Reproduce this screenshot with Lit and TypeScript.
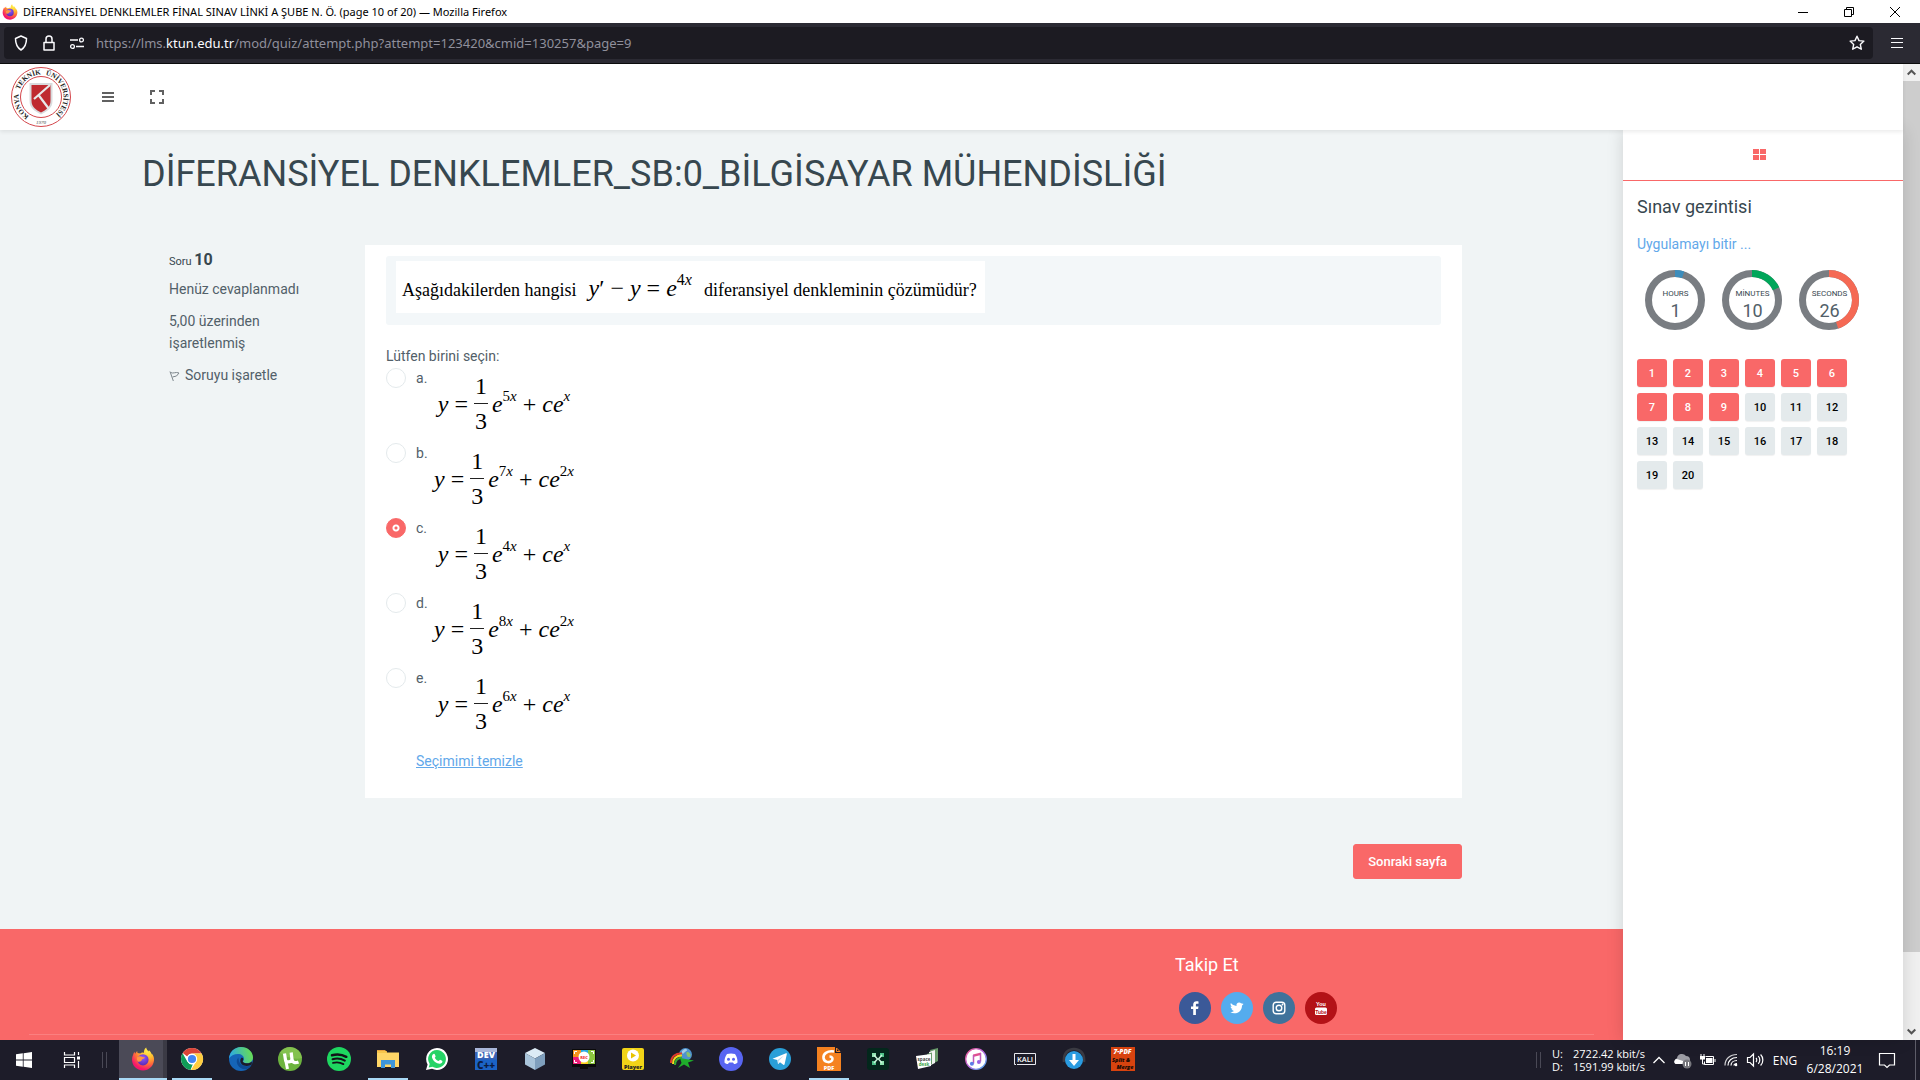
import { LitElement, html, svg, css, nothing, type TemplateResult } from "lit";
import { customElement, state } from "lit/decorators.js";
import { classMap } from "lit/directives/class-map.js";

type Glyph = TemplateResult<2>;

const icon = (size: number, body: Glyph, box = "0 0 24 24") => html`
  <svg width=${size} height=${size} viewBox=${box} fill="none" aria-hidden="true">${body}</svg>
`;

const firefox = svg`
  <defs>
    <radialGradient id="fx" cx="0.72" cy="0.12" r="0.95">
      <stop offset="0" stop-color="#fff44f"/><stop offset="0.35" stop-color="#ffbd2e"/>
      <stop offset="0.62" stop-color="#ff7139"/><stop offset="0.9" stop-color="#f5156c"/>
    </radialGradient>
    <radialGradient id="fp" cx="0.5" cy="0.3" r="0.7">
      <stop offset="0" stop-color="#9059ff"/><stop offset="1" stop-color="#5b2ab5"/>
    </radialGradient>
  </defs>
  <path fill="url(#fx)" d="M2.2 7.5c.2-1 .7-2 1.3-2.700.1.800.300 1.400.600 1.900C4.600 5.600 5.500 4.700 6.200 3.900c0 .9.100 1.600.5 2.200.8.3 1.700.2 2.600.3C10.300 5.500 12 5.400 13 6c-.3-2 .4-4.300 2.200-5.500.2 1.800 1.300 2.800 2.600 4.100.1-.5.100-1-.1-1.500 1.500 1.200 2.600 2.900 3 4.400.1-.3.100-.6.100-.9C22.700 9 23.300 11.300 23 13.600 22.400 19.300 17.800 23.500 12 23.500 5.800 23.500 1 18.700 1 12.600c0-1.800.4-3.600 1.200-5.100z"/>
  <circle cx="12" cy="12.800" r="5.600" fill="url(#fp)"/>
  <path fill="#ff9640" d="M6 10.500c1.500-1.600 4-1.800 5.600-.6 1 .1 1.900.1 2.400.5-.6 1-2.300 1.400-3 2.100-.4 1.900-2.500 2.500-4.300 2C6 13.300 5.700 11.800 6 10.500z"/>
`;

const windowsLogo = svg`<path fill="#fff" d="M4 6.300l6.800-1v6.200H4zM11.600 5.200L20 4v7.500h-8.400zM4 12.400h6.800v6.300L4 17.800zM11.600 12.400H20V20l-8.400-1.200z"/>`;
const taskView = svg`<g stroke="#fff" stroke-width="1.200"><path d="M4.500 4v3h10V4M4.500 20v-3h10v3M4.500 9.500h10v5h-10zM18.500 4v3M18.500 13v7"/></g><path fill="#fff" d="M17 8.500h3v3h-3z"/>`;
const chrome = svg`
  <circle cx="12" cy="12" r="11" fill="#fff"/>
  <path fill="#db4437" d="M12 1a11 11 0 0 1 9.600 5.600H12a5.400 5.400 0 0 0-4.800 3L2.800 6A11 11 0 0 1 12 1z"/>
  <path fill="#0f9d58" d="M2.600 6.300L7.300 14.600A5.400 5.400 0 0 0 12.800 17.300L10.500 22.900A11 11 0 0 1 2.600 6.300z"/>
  <path fill="#ffcd40" d="M12 6.600h9.600A11 11 0 0 1 11 23l5.400-9a5.400 5.400 0 0 0-4.400-7.400z"/>
  <circle cx="12" cy="12" r="5.200" fill="#fff"/><circle cx="12" cy="12" r="4.100" fill="#4285f4"/>`;
const edge = svg`
  <defs><linearGradient id="e1" x1="0" y1="0.500" x2="1" y2="0.300"><stop offset="0" stop-color="#2aa7e8"/><stop offset="1" stop-color="#6be04c"/></linearGradient></defs>
  <circle cx="12" cy="12" r="12" fill="#1565b8"/>
  <path fill="url(#e1)" d="M0 11.500C.5 5 5.500 0 12 0c7 0 12 5 12 10.500 0 3.500-2.700 5.800-6 5.800-2.500 0-4-.8-4-1.700 0-.6 1-1.100 1-2.900C15 9 12.500 6.900 9 6.900c-4 0-7.500 2-9 4.600z"/>
  <path fill="#0d4a94" d="M9.500 10.500C7.500 12 7.200 15 8.500 17.500 10 20.500 13.500 22.500 17 22.200c2-.4 4-2 5.300-3.900-3.800 1.900-8.700 1.200-11.200-2-1.200-1.700-1.600-3.800-1.600-5.800z"/>
  <path fill="#1c1b29" d="M22.800 17.500c-1 .7-3 1.500-5.300 1.400-3.500-.1-6.500-2.400-6.200-5.500.1-1.300.7-2.200 1.600-2.800 1.400.3 2 1.700.9 3.200-.4.800.6 2.500 4.200 2.500 2 0 3.700-.6 4.900-1.800z"/>`;
const utorrent = svg`<circle cx="12" cy="12" r="12" fill="#6db33f"/><path fill="#92cc5a" d="M12 0a12 12 0 0 1 12 11C17 13 7 10 2 5.500A12 12 0 0 1 12 0z" opacity=".6"/><path stroke="#fff" stroke-width="3.200" stroke-linejoin="round" d="M6.500 6.500l1 6.500c.6 2.500 5.500 2.500 6.500-.5L13.200 5.500M14 12.500c.8 3 3 4 6.500 2.500"/><path stroke="#fff" stroke-width="3" d="M7.500 12l2 10"/>`;
const spotify = svg`<circle cx="12" cy="12" r="12" fill="#1ed760"/><g stroke="#121218" stroke-linecap="round"><path stroke-width="2.500" d="M5 8.300c5-1.500 10-.9 14.300 1.500"/><path stroke-width="2.100" d="M5.600 12.200c4.200-1.200 8.500-.7 12.200 1.400"/><path stroke-width="1.800" d="M6 15.900c3.600-1 7.200-.6 10.400 1.200"/></g>`;
const folder = svg`<path fill="#e8a33d" d="M1 3h8l2 2v3H1z"/><path fill="#ffd667" d="M1 5.500h22V20H1z"/><path fill="#f7c64c" d="M1 4h10l-1 2H1z"/><path fill="#3d95d9" d="M5 13h14v8h-4v-3.500H9V21H5z"/>`;
const whatsapp = svg`<path fill="#fff" d="M12 1a11 11 0 1 1-5 20.800L1 23l1.600-5.500A11 11 0 0 1 12 1z"/><path fill="#25d366" d="M12 3a9 9 0 1 1-4.600 16.800L3.700 20.500l1-3.500A9 9 0 0 1 12 3z"/><path fill="#fff" d="M8.500 7c.7-.4 1.200-.1 1.500.7l.6 1.500c.1.700-.8 1.200-.8 1.600.7 1.500 2 2.700 3.700 3.300.6 0 1-1.300 1.600-1.300l2 1c.6.400.3 1.500-.2 2-1.300 1.300-3 1-4.600.4C9.700 15 7.700 13 7 10.400 6.800 8.900 7.300 7.700 8.500 7z"/>`;
const dev = svg`<path fill="#3862b5" d="M1 1h22v22H1z"/><path fill="#a9b6da" d="M1 1h22v4H1z"/><path fill="#1b63c5" d="M1 12.500h22V23H1z"/><text x="12" y="11" text-anchor="middle" font-family="Open Sans" font-weight="800" font-size="9" fill="#fff">DEV</text><text x="12" y="22" text-anchor="middle" font-family="Open Sans" font-weight="800" font-size="10" fill="#0c1b3e">C++</text>`;
const cube = svg`<path fill="#dcebf5" d="M12 1l10 5-10 5.500L2 6z"/><path fill="#a9c4da" d="M2 6l10 5.500V23L2 17.500z"/><path fill="#7f9fbd" d="M22 6l-10 5.500V23l10-5.500z"/>`;
const rec = svg`<path fill="#0a0a0a" d="M0 2h24v18H0zM8 20h8v2H8z"/><path fill="#f7941d" d="M1 3h8v8H1z"/><path fill="#29abe2" d="M9 3h7v8H9z"/><path fill="#8cc63f" d="M16 3h7v14h-7z"/><path fill="#ed1e79" d="M1 10h8v7H1z"/><path fill="#fcd21c" d="M9 12h7v5H9z"/><circle cx="12" cy="10" r="5.500" fill="#fff"/><text x="12" y="12" text-anchor="middle" font-family="Open Sans" font-weight="800" font-size="4" fill="#e33">REC</text><path stroke="#fff" d="M2.500 7V4.500H5M19 4.500h2.500V7M2.500 13v2.500H5M19 15.500h2.500V13"/>`;
const player = svg`<rect x="1" y="1" width="22" height="22" rx="2" fill="#f2d417"/><circle cx="12" cy="8.500" r="6" fill="#fff"/><path fill="#e8c400" d="M10 5.500l5 3-5 3z"/><text x="12" y="21.500" text-anchor="middle" font-family="Open Sans" font-weight="800" font-size="5.500" fill="#222">Player</text>`;
const idm = svg`<circle cx="15.500" cy="7.500" r="6.500" fill="#4f93cf"/><path fill="#a8cfe8" d="M12 4c2-2.500 4-2.500 5-1.500s-2 2-3 3.500-2.500.5-2-2z"/><path fill="#8cc36a" d="M17 5c2 0 4 2 3.500 4s-3 1-3.500-.5-1-2.500 0-3.500z"/><g stroke-width="2"><path stroke="#e03a2b" d="M1 16C1 9 6 6 12 6.500"/><path stroke="#f7d51d" d="M3 17c0-5 3-8.500 9-8.500"/><path stroke="#3aa832" d="M5 18c0-4 2-7 7-7.500"/></g><path fill="#1fae2b" d="M10 11l14 2.500-6 2L20 21l-6-3.500L8 21l3.500-5z"/>`;
const discord = svg`<circle cx="12" cy="12" r="12" fill="#5865f2"/><path fill="#fff" d="M8 7c2.500-.8 5.500-.8 8 0 1.800 2.500 2.700 5.500 2.500 8.500-1 1-2.300 1.500-3.500 1.500l-1-1.500H10L9 17c-1.200 0-2.500-.5-3.500-1.500C5.300 12.500 6.200 9.500 8 7z"/><circle cx="9.500" cy="12.300" r="1.500" fill="#5865f2"/><circle cx="14.500" cy="12.300" r="1.500" fill="#5865f2"/>`;
const telegram = svg`<circle cx="12" cy="12" r="11" fill="#2a9fd8"/><path fill="#fff" d="M4.500 11.800l13.500-5.500c.8-.2 1 .3.800 1l-2.200 10c-.2.700-.8.800-1.300.4l-3.300-2.400-2 1.900-.6-4.200z"/><path fill="#b9dcf0" d="M9.400 13l6.600-4.500-5.300 5.600-.4 3.100z"/>`;
const foxit = svg`<path fill="#f58220" d="M0 0h18v6h6v18H0z"/><path stroke="#f58220" d="M19.500 1v3.500H23z"/><path stroke="#fff" stroke-width="2.600" d="M17 4.500C10 3.500 6 7 6.500 11s6 5.500 8.500 2.500c1-2 .5-4-2.500-4"/><text x="12" y="23" text-anchor="middle" font-family="Open Sans" font-weight="800" font-size="5.500" fill="#fff">PDF</text>`;
const greenTile = svg`<rect x="1" y="1" width="22" height="22" rx="3" fill="#03271c"/><path fill="#8fe3b0" d="M6 6h4v4H6zM14 14h4v4h-4z"/><path fill="#4fc38a" d="M14 6h4v4h-4zM6 14h4v4H6z"/><path stroke="#c9f3da" stroke-width="1.500" d="M8 8l3.500 4L8 16M16 8l-3.500 4 3.500 4"/>`;
const spacedesk = svg`<path fill="#6a9c6c" d="M15 3l8-2v13l-4 2z"/><path fill="#f2f5f2" d="M14 5l6-2v13l-4 2z"/><path fill="#6a9c6c" d="M12 7l5-1.500V17l-4 2z"/><path fill="#fff" d="M1 9l15-2v12L3 22z"/><text x="9" y="14" text-anchor="middle" font-family="Open Sans" font-weight="700" font-size="4.500" fill="#444">space</text><text x="9" y="19" text-anchor="middle" font-family="Open Sans" font-weight="700" font-size="4.500" fill="#3aa34a">desk</text>`;
const itunes = svg`<defs><linearGradient id="it" x1="0" y1="0" x2="1" y2="1"><stop offset="0" stop-color="#f25a8e"/><stop offset="0.500" stop-color="#b968e0"/><stop offset="1" stop-color="#46b4f0"/></linearGradient></defs><circle cx="12" cy="12" r="10.300" fill="#fff" stroke="url(#it)" stroke-width="1.300"/><path fill="#e05090" d="M9 7.500l8-2V8l-8 2z"/><path stroke="#c05ab8" stroke-width="1.500" d="M9.500 8v8.500M16.500 6v8.500"/><circle cx="7.900" cy="16.800" r="2" fill="#5d7de8"/><circle cx="14.900" cy="15" r="2" fill="#9a5fe0"/>`;
const kali = svg`<path stroke="#e8e8ee" d="M1.500 6.500h21v11H4M1.500 6.500v11H3"/><text x="12" y="15" text-anchor="middle" font-family="Open Sans" font-weight="600" font-size="7.500" fill="#fff">KALI</text>`;
const download = svg`<path stroke="#3a3a42" stroke-width="2.500" d="M2 15C1 6 6 2 12 2s11 4 10 13"/><circle cx="12" cy="13" r="9" fill="#2a9be0"/><path fill="#fff" d="M10.500 7h3v6H17l-5 6-5-6h3.500z"/>`;
const sevenPdf = svg`<path fill="#d8430f" d="M0 0h24v24H0z"/><g font-family="Open Sans" font-weight="800" font-style="italic" text-anchor="middle"><text x="11.500" y="7" font-size="6.500" fill="#fff">7-PDF</text><text x="10" y="15" font-size="5.500" fill="#1a0a05">Split &amp;</text><text x="14" y="21.500" font-size="5.500" fill="#1a0a05">Merge</text></g>`;

const crest = svg`
  <defs><path id="rim" d="M30 52.500A22.500 22.500 0 1 1 30.100 52.500"/></defs>
  <circle cx="30" cy="30" r="29.500" fill="#fff" stroke="#d4474c" stroke-width="1"/>
  <circle cx="30" cy="30" r="20.500" stroke="#d4474c" stroke-width="1"/>
  <g font-family="Liberation Serif" font-weight="700" font-size="7" fill="#222" text-anchor="middle">
    <text><textPath href="#rim" startOffset="18%">KONYA</textPath></text>
    <text><textPath href="#rim" startOffset="40%">TEKNİK</textPath></text>
    <text><textPath href="#rim" startOffset="71%">ÜNİVERSİTESİ</textPath></text>
  </g>
  <text x="30" y="57" text-anchor="middle" font-family="Liberation Serif" font-style="italic" font-size="5" fill="#444">1970</text>
  <path fill="#d9dbdd" d="M18.500 16h23v18c0 7-5.500 10.500-11.500 13.500C24 44.500 18.500 41 18.500 34z"/>
  <path fill="#bf2a30" d="M20.500 18h19v16c0 6-4.500 9-9.500 11.500C25 43 20.500 40 20.500 34z"/>
  <path stroke="#e8e9ea" stroke-width="2.200" d="M39 18L23 32M27.500 28L38 42"/>
`;

interface TaskItem { name: string; glyph: Glyph; running?: boolean; active?: boolean }

const TASKS: TaskItem[] = [
  { name: "Firefox", glyph: firefox, active: true },
  { name: "Chrome", glyph: chrome, running: true },
  { name: "Edge", glyph: edge },
  { name: "uTorrent", glyph: utorrent },
  { name: "Spotify", glyph: spotify },
  { name: "File Explorer", glyph: folder, running: true },
  { name: "WhatsApp", glyph: whatsapp },
  { name: "Dev-C++", glyph: dev },
  { name: "VirtualBox", glyph: cube },
  { name: "Recorder", glyph: rec },
  { name: "Player", glyph: player },
  { name: "Download Manager", glyph: idm },
  { name: "Discord", glyph: discord },
  { name: "Telegram", glyph: telegram },
  { name: "Foxit PDF", glyph: foxit, running: true },
  { name: "Camtasia", glyph: greenTile },
  { name: "spacedesk", glyph: spacedesk },
  { name: "iTunes", glyph: itunes },
  { name: "Kali", glyph: kali },
  { name: "Downloads", glyph: download },
  { name: "7-PDF Split & Merge", glyph: sevenPdf },
];

const OPTIONS = [
  { key: "a", first: "5", second: "" },
  { key: "b", first: "7", second: "2" },
  { key: "c", first: "4", second: "" },
  { key: "d", first: "8", second: "2" },
  { key: "e", first: "6", second: "" },
];

const CLOCKS = [
  { label: "HOURS", value: 1, share: 5, color: "#3c8dbc" },
  { label: "MİNUTES", value: 10, share: 18, color: "#00a65a" },
  { label: "SECONDS", value: 26, share: 45, color: "#f56954" },
];

@customElement("window-chrome")
class WindowChrome extends LitElement {
  static styles = css`
    :host { display: block; font-family: "Noto Sans", "Open Sans", sans-serif; }
    button { border: 0; background: none; padding: 0; display: grid; place-items: center; }
    .title { display: flex; align-items: center; height: 23px; background: #fff; color: #000; font-size: 11px; padding: 0 2px; }
    .title span { flex: 1; padding-left: 5px; }
    .title button { width: 46px; height: 23px; }
    .bar { display: flex; align-items: center; height: 40px; background: #2b2a33; border-bottom: 1px solid #0c0c0d; padding-left: 4px; }
    .field { flex: 1; display: flex; align-items: center; height: 32px; background: #1c1b22; border-radius: 4px; padding: 0 7px 0 8px; }
    .field button { width: 18px; height: 18px; margin-right: 10px; }
    .field .star { margin: 0; }
    .url { flex: 1; font-size: 13px; color: #8f8f9b; text-decoration: none; }
    .url b { font-weight: 400; color: #fbfbfe; }
    .menu { width: 47px; height: 32px; }
  `;
  render() {
    return html`
      <header class="title">
        ${icon(16, firefox)}
        <span>DİFERANSİYEL DENKLEMLER FİNAL SINAV LİNKİ A ŞUBE N. Ö. (page 10 of 20) — Mozilla Firefox</span>
        <button aria-label="Minimize">${icon(12, svg`<path stroke="#000" d="M1 6.500h10"/>`, "0 0 12 12")}</button>
        <button aria-label="Restore">${icon(12, svg`<path stroke="#000" d="M1.500 3.500h7v7h-7zM3.500 3V1.500h7v7H9"/>`, "0 0 12 12")}</button>
        <button aria-label="Close">${icon(12, svg`<path stroke="#000" d="M1 1l10 10M11 1L1 11"/>`, "0 0 12 12")}</button>
      </header>
      <nav class="bar">
        <div class="field">
          <button aria-label="Tracking protection">${icon(16, svg`<path stroke="#fbfbfe" stroke-width="1.500" stroke-linejoin="round" d="M8 1L13.500 3.500C13.500 9 12 12.500 8 15 4 12.500 2.500 9 2.500 3.500z"/>`, "0 0 16 16")}</button>
          <button aria-label="Connection secure">${icon(16, svg`<path stroke="#fbfbfe" stroke-width="1.500" stroke-linejoin="round" d="M3 7.500h10v7.500H3zM5 7.500V4a3 3 0 0 1 6 0v3.500"/>`, "0 0 16 16")}</button>
          <button aria-label="Permissions">${icon(16, svg`<path stroke="#fbfbfe" stroke-width="1.500" d="M1 5h8M7 11.500h8"/><circle cx="12.500" cy="5" r="1.900" stroke="#fbfbfe" stroke-width="1.300"/><circle cx="3.500" cy="11.500" r="1.900" stroke="#fbfbfe" stroke-width="1.300"/>`, "0 0 16 16")}</button>
          <a class="url" href="#">https://lms.<b>ktun.edu.tr</b>/mod/quiz/attempt.php?attempt=123420&amp;cmid=130257&amp;page=9</a>
          <button class="star" aria-label="Bookmark">${icon(16, svg`<path stroke="#fbfbfe" stroke-width="1.400" stroke-linejoin="round" d="M8 1.200l2 4.400 4.900.5-3.600 3.300 1 4.800L8 11.800l-4.300 2.400 1-4.800L1.100 6.100 6 5.600z"/>`, "0 0 16 16")}</button>
        </div>
        <button class="menu" aria-label="Menu">${icon(12, svg`<path stroke="#fbfbfe" d="M0 1.500h12M0 5.500h12M0 10.500h12"/>`, "0 0 12 12")}</button>
      </nav>
    `;
  }
}

@customElement("quiz-question")
class QuizQuestion extends LitElement {
  @state() private choice = "c";

  static styles = css`
    :host { display: block; font-family: Roboto, sans-serif; font-size: 14px; line-height: 22px; color: #526069; }
    .row { display: grid; grid-template-columns: 223px minmax(0, 1fr); }
    .info { padding: 5px 50px 0 27px; display: flex; flex-direction: column; gap: 10px; align-items: flex-start; }
    .info p { margin: 0; }
    h3 { margin: 0 0 -4px; font-size: 11px; font-weight: 400; line-height: 20px; color: #37474f; }
    h3 b { font-size: 16px; font-weight: 700; }
    .flag { display: flex; align-items: center; gap: 4px; border: 0; background: none; padding: 0; font: inherit; color: inherit; }
    .card { background: #fff; padding: 11px 21px 26px; }
    .text { background: #f3f7f9; border-radius: 3px; padding: 5px 10px 12px; display: flex; }
    .serif { font-family: "Liberation Serif", serif; color: #000; }
    .stem { display: flex; align-items: baseline; margin: 0; background: #fff; height: 52px; line-height: 52px; padding: 3px 8px 0 6px; box-sizing: border-box; font-size: 18px; white-space: pre; }
    .eq { font-size: 24px; padding: 0 12px; line-height: 24px; }
    sup { font-size: 16px; line-height: 0; vertical-align: 11px; }
    fieldset { border: 0; margin: 20px 0 0; padding: 0; }
    legend { padding: 0; }
    .option { display: grid; grid-template-columns: 20px 16px auto; column-gap: 10px; justify-content: start; height: 75px; }
    input { appearance: none; width: 20px; height: 20px; margin: 1px 0 0; border: 1px solid #e4eaec; border-radius: 50%; background: #fff; }
    input:checked { border-color: #f96868; background: radial-gradient(circle, #f96868 1px, #fff 2px 3px, #f96868 4px); }
    .math { display: flex; align-items: center; justify-content: center; width: 144px; margin-left: -10px; height: 73px; font-size: 24px; line-height: 26px; white-space: pre; }
    .math sup { font-size: 15px; }
    .frac { display: flex; flex-direction: column; align-items: center; width: 14px; margin: 0 4px 0 6px; line-height: 34px; }
    .frac i { width: 100%; height: 1px; background: #222; }
    .clear { display: inline-block; margin: 8px 0 0 30px; color: #62a8ea; }
    .submit { display: flex; justify-content: flex-end; padding: 46px 0 50px; }
    .next { height: 35px; border: 1px solid #f96868; border-radius: 3px; background: #f96868; color: #fff; font: 500 13px/20px Roboto, sans-serif; padding: 0 14px; }
  `;

  render() {
    return html`
      <div class="row">
        <section class="info">
          <h3>Soru <b>10</b></h3>
          <p>Henüz cevaplanmadı</p>
          <p>5,00 üzerinden işaretlenmiş</p>
          <button class="flag">
            ${icon(12, svg`<path stroke="#7d868c" d="M1 2.500l3.500 10M1.500 3.500c3 1.500 5-1 8.500.5L7.500 7 3.500 8"/>`, "0 0 12 12")}Soruyu işaretle
          </button>
        </section>
        <section class="card">
          <div class="text">
            <p class="stem serif">Aşağıdakilerden hangisi<span class="eq"><em>y</em>′ − <em>y</em> = <em>e</em><sup>4<em>x</em></sup></span>diferansiyel denkleminin çözümüdür?</p>
          </div>
          <fieldset>
            <legend>Lütfen birini seçin:</legend>
            ${OPTIONS.map(
              (o) => html`
                <label class="option">
                  <input type="radio" name="answer" .checked=${this.choice === o.key} @change=${() => (this.choice = o.key)} />
                  <span>${o.key}.</span>
                  <span class="math serif"><span><em>y</em> =</span><span class="frac"><span>1</span><i></i><span>3</span></span><span><em>e</em><sup>${o.first}<em>x</em></sup> + <em>ce</em><sup>${o.second}<em>x</em></sup></span></span>
                </label>
              `
            )}
          </fieldset>
          <a class="clear" href="#">Seçimimi temizle</a>
        </section>
      </div>
      <div class="submit"><button class="next">Sonraki sayfa</button></div>
    `;
  }
}

@customElement("quiz-sidebar")
class QuizSidebar extends LitElement {
  static styles = css`
    :host { display: block; font-family: Roboto, sans-serif; background: #fff; color: #37474f; }
    .tab { display: grid; place-items: center; width: 100%; height: 51px; border: 0; border-bottom: 1px solid #f96868; background: none; padding: 0 8px 0 0; }
    .body { padding: 16px 14px; }
    h2 { margin: 0; font-size: 18px; font-weight: 400; line-height: 20px; }
    .finish { display: block; margin-top: 16px; font-size: 14px; line-height: 22px; color: #62a8ea; text-decoration: none; }
    .clocks { display: flex; gap: 16px; padding: 14px 8px 28px; }
    .clock { display: grid; place-items: center; width: 61px; height: 62px; }
    .clock > * { grid-area: 1 / 1; }
    .face { display: flex; flex-direction: column; align-items: center; font-size: 8px; line-height: 9px; padding-top: 12px; }
    .face b { font-weight: 400; font-size: 18px; line-height: 26px; color: #526069; }
    .pages { display: grid; grid-template-columns: repeat(6, 30px); gap: 6px; }
    .page { display: grid; place-items: center; height: 28px; border-radius: 3px; background: #e4eaec; color: #000; font-size: 11px; font-weight: 500; text-decoration: none; box-shadow: 0 1px 1px rgba(0, 0, 0, 0.06); }
    .done { background: #f96868; color: #fff; }
  `;
  render() {
    return html`
      <button class="tab" aria-label="Bloklar">${icon(14, svg`<path fill="#f96868" d="M1 1h6v5H1zM8 1h6v5H8zM1 7h6v5H1zM8 7h6v5H8z"/>`, "0 0 14 14")}</button>
      <div class="body">
        <h2>Sınav gezintisi</h2>
        <a class="finish" href="#">Uygulamayı bitir ...</a>
        <div class="clocks">
          ${CLOCKS.map(
            (c) => html`
              <div class="clock">
                <svg width="61" height="61" viewBox="0 0 61 61" fill="none" stroke-width="7" aria-hidden="true">
                  <circle cx="30" cy="30" r="26.500" stroke="#797d82" />
                  <circle cx="30" cy="30" r="26.500" stroke=${c.color} pathLength="100" stroke-dasharray="${c.share} 100" transform="rotate(-90 30 30)" />
                </svg>
                <div class="face"><span>${c.label}</span><b>${c.value}</b></div>
              </div>
            `
          )}
        </div>
        <nav class="pages">
          ${Array.from({ length: 20 }, (_, i) => html`<a href="#" class=${classMap({ page: true, done: i < 9 })}>${i + 1}</a>`)}
        </nav>
      </div>
    `;
  }
}

@customElement("task-bar")
class TaskBar extends LitElement {
  static styles = css`
    :host { display: flex; height: 40px; background: #1d1c29; color: #fff; font: 12px "Open Sans", "Noto Sans", sans-serif; }
    button { border: 0; background: none; padding: 0; color: inherit; font: inherit; display: grid; place-items: center; }
    .item { width: 48px; height: 40px; box-sizing: border-box; }
    .apps { display: flex; gap: 1px; }
    .apps .item { padding-bottom: 2px; border-bottom: 0; }
    .apps .active { background: linear-gradient(to right, #4b4a57 44px, #3b3a45 44px); border-bottom: 2px solid #a9d9f5; padding-bottom: 0; }
    .apps .running { background: linear-gradient(#a9d9f5, #a9d9f5) bottom / 40px 2px no-repeat; }
    .grip { width: 3px; height: 16px; border: solid #4a4956; border-width: 0 1px; align-self: center; }
    .grip.left { margin: 0 12px 0 6px; }
    .tray { margin-left: auto; display: flex; align-items: center; }
    .net { display: grid; grid-template-columns: 21px 72px; margin: 0 2px 0 11px; font-size: 11px; line-height: 13px; white-space: nowrap; }
    .net span:nth-child(even) { text-align: right; }
    .tray button { width: 24px; height: 40px; }
    .tray .lang { width: 36px; }
    .tray .clock { width: 64px; margin-right: 5px; line-height: 18px; align-content: center; }
    .tray .note { width: 30px; }
    .desk { border-left: 1px solid #5d5c68; width: 4px; height: 40px; margin-left: 13px; }
  `;
  render() {
    return html`
      <button class="item" aria-label="Start">${icon(24, windowsLogo)}</button>
      <button class="item" aria-label="Task view">${icon(24, taskView)}</button>
      <span class="grip left"></span>
      <nav class="apps">
        ${TASKS.map(
          (t) => html`<button class=${classMap({ item: true, active: !!t.active, running: !!t.running })} aria-label=${t.name} aria-current=${t.active ? "true" : nothing}>${icon(24, t.glyph)}</button>`
        )}
      </nav>
      <div class="tray">
        <span class="grip"></span>
        <div class="net"><span>U:</span><span>2722.42 kbit/s</span><span>D:</span><span>1591.99 kbit/s</span></div>
        <button aria-label="Hidden icons">${icon(14, svg`<path stroke="#fff" stroke-width="1.300" d="M1.500 10L7 4.500 12.500 10"/>`, "0 0 14 14")}</button>
        <button aria-label="OneDrive">${icon(18, svg`<path fill="#9b9ba3" d="M3 13a3 3 0 0 1 0-5.800A5 5 0 0 1 12 5a4 4 0 0 1 4 4v4z"/><path fill="#fff" d="M1.500 13a2.500 2.500 0 0 1 3-4.500L9 10v3z"/><circle cx="13" cy="13" r="4.500" fill="#77777d"/><path stroke="#fff" d="M11.500 11v4M14.500 11v4"/>`, "0 0 18 18")}</button>
        <button aria-label="Battery">${icon(18, svg`<path stroke="#fff" d="M7.500 5.500h8v8h-9v-3M17 8v3"/><path fill="#fff" d="M8 7h6.500v5H8zM2 5h5v3.500H2z"/><path stroke="#fff" d="M3 5V3M6 5V3M4.500 8v5H7"/>`, "0 0 18 18")}</button>
        <button aria-label="Wi-Fi">${icon(18, svg`<g stroke="#fff" stroke-width="1.200"><path d="M3 14.500C3 8 8 3.500 15 3.500" opacity=".8"/><path d="M6 14.500C6 10 9.500 6.500 15 6.500M9 14.500c0-3 2.500-5 6-5"/><path d="M12 14.500c0-1 1-2 3-2"/></g><circle cx="14" cy="14" r="1.300" fill="#fff"/>`, "0 0 18 18")}</button>
        <button aria-label="Volume">${icon(18, svg`<path stroke="#fff" stroke-width="1.200" d="M1.500 6.500H4L7.500 3v12L4 11.500H1.500zM10 7c1 1 1 3 0 4M12.300 5.200c2 2 2 5.600 0 7.600M14.600 3.500c3 3 3 8 0 11"/>`, "0 0 18 18")}</button>
        <button class="lang">ENG</button>
        <button class="clock"><span>16:19</span><span>6/28/2021</span></button>
        <button class="note" aria-label="Notifications">${icon(18, svg`<path stroke="#fff" stroke-width="1.200" d="M1.500 2.500h15v11.500h-5L9 16.500 6.500 14h-5z"/>`, "0 0 18 18")}</button>
        <span class="desk"></span>
      </div>
    `;
  }
}

@customElement("app-root")
class AppRoot extends LitElement {
  static styles = css`
    :host { display: flex; flex-direction: column; min-height: 100vh; background: #f0f4f5; font-family: Roboto, sans-serif; }
    .view { flex: 1; display: flex; }
    .site { flex: 1; display: flex; flex-direction: column; min-width: 0; }
    .top { display: flex; align-items: center; height: 66px; background: #fff; padding-left: 11px; box-shadow: 0 2px 4px rgba(0, 0, 0, 0.08); z-index: 2; }
    .top button { border: 0; background: none; padding: 0; display: grid; place-items: center; width: 49px; height: 66px; }
    .brand { display: grid; margin-right: 12px; }
    .columns { flex: 1; display: flex; }
    .content { flex: 1; display: flex; flex-direction: column; min-width: 0; }
    main { flex: 1; padding: 24px 161px 0 142px; }
    h1 { margin: 0 0 51px; font-size: 36px; line-height: 40px; font-weight: 400; color: #37474f; }
    quiz-sidebar { flex: 0 0 280px; z-index: 1; box-shadow: 0 0 16px rgba(0, 0, 0, 0.14); }
    footer { background: #f96868; color: #fff; padding: 25px 29px 5px; }
    .follow { width: 419px; margin: 0 0 0 auto; }
    footer h2 { margin: 0 0 16px; font-size: 18px; font-weight: 400; line-height: 22px; }
    .social { display: flex; gap: 10px; padding: 0 4px 10px; }
    .social a { display: grid; place-items: center; width: 32px; height: 32px; border-radius: 50%; }
    .fb { background: #3b5998; }
    .tw { background: #55acee; }
    .ig { background: #3f729b; }
    .yt { background: #b31217; }
    hr { margin: 0; border: 0; height: 1px; background: #fb8080; }
    .scroll { display: flex; flex-direction: column; width: 17px; background: #f0f0f0; }
    .scroll button { border: 0; padding: 0; background: #f0f0f0; height: 17px; display: grid; place-items: center; }
    .track { flex: 1; display: grid; grid-template-rows: 871fr 71fr; }
    .thumb { background: #cdcdcd; }
  `;
  render() {
    return html`
      <window-chrome></window-chrome>
      <div class="view">
        <div class="site">
          <header class="top">
            <a class="brand" href="#" aria-label="Konya Teknik Üniversitesi">${icon(60, crest, "0 0 60 60")}</a>
            <button aria-label="Menü">${icon(12, svg`<path fill="#616161" d="M0 1h12v2H0zM0 5h12v2H0zM0 9h12v2H0z"/>`, "0 0 12 12")}</button>
            <button aria-label="Tam ekran">${icon(14, svg`<path stroke="#616161" stroke-width="2" d="M1 5V1h4M9 1h4v4M13 9v4H9M5 13H1V9"/>`, "0 0 14 14")}</button>
          </header>
          <div class="columns">
            <div class="content">
              <main>
                <h1>DİFERANSİYEL DENKLEMLER_SB:0_BİLGİSAYAR MÜHENDİSLİĞİ</h1>
                <quiz-question></quiz-question>
              </main>
              <footer>
                <div class="follow">
                  <h2>Takip Et</h2>
                  <nav class="social">
                    <a class="fb" href="#" aria-label="Facebook">${icon(14, svg`<path fill="#fff" d="M10.500.5v2.300H9.100c-1 0-1.200.5-1.200 1.200v1.500h2.600l-.4 2.500H7.900V14H5.200V8H3V5.500h2.200V3.600C5.200 1.500 6.500.3 8.500.3c.9 0 1.700.1 2 .2z"/>`, "0 0 14 14")}</a>
                    <a class="tw" href="#" aria-label="Twitter">${icon(14, svg`<path fill="#fff" d="M13.300 3.200c-.4.500-.8.900-1.300 1.300.1 4-2.700 7.800-7.700 7.800-1.500 0-2.900-.4-4.100-1.200 1.400.2 2.800-.2 3.900-1.100-1.200 0-2.100-.8-2.500-1.900.4.100.8.100 1.200 0C1.500 7.800.6 6.700.6 5.400c.4.200.8.300 1.200.3C.6 4.900.2 3.300.9 2.100c1.400 1.700 3.400 2.700 5.600 2.800C6.100 3 7.400 1.500 9.200 1.500c.8 0 1.500.3 2 .9.600-.1 1.200-.4 1.700-.7-.2.600-.6 1.200-1.200 1.500.600-.1 1.100-.2 1.600-.4z"/>`, "0 0 14 14")}</a>
                    <a class="ig" href="#" aria-label="Instagram">${icon(14, svg`<rect x="1.200" y="1.200" width="11.600" height="11.600" rx="3" stroke="#fff" stroke-width="1.400"/><circle cx="7" cy="7" r="2.800" stroke="#fff" stroke-width="1.400"/><circle cx="10.500" cy="3.500" r=".9" fill="#fff"/>`, "0 0 14 14")}</a>
                    <a class="yt" href="#" aria-label="YouTube">${icon(14, svg`<text x="7" y="5" text-anchor="middle" font-family="Liberation Sans Narrow, Liberation Sans" font-weight="700" font-size="5.500" fill="#fff">You</text><rect x="1" y="6.500" width="12" height="7.500" rx="1.500" fill="#fff"/><text x="7" y="12.500" text-anchor="middle" font-family="Liberation Sans Narrow, Liberation Sans" font-weight="700" font-size="5" fill="#b31217">Tube</text>`, "0 0 14 14")}</a>
                  </nav>
                </div>
                <hr />
              </footer>
            </div>
            <quiz-sidebar></quiz-sidebar>
          </div>
        </div>
        <div class="scroll">
          <button aria-label="Yukarı">${icon(9, svg`<path stroke="#555" stroke-width="2" d="M.7 6.500L4.500 2.700l3.800 3.800"/>`, "0 0 9 9")}</button>
          <div class="track"><div class="thumb"></div></div>
          <button aria-label="Aşağı">${icon(9, svg`<path stroke="#555" stroke-width="2" d="M.7 2.500l3.800 3.800 3.800-3.800"/>`, "0 0 9 9")}</button>
        </div>
      </div>
      <task-bar></task-bar>
    `;
  }
}
